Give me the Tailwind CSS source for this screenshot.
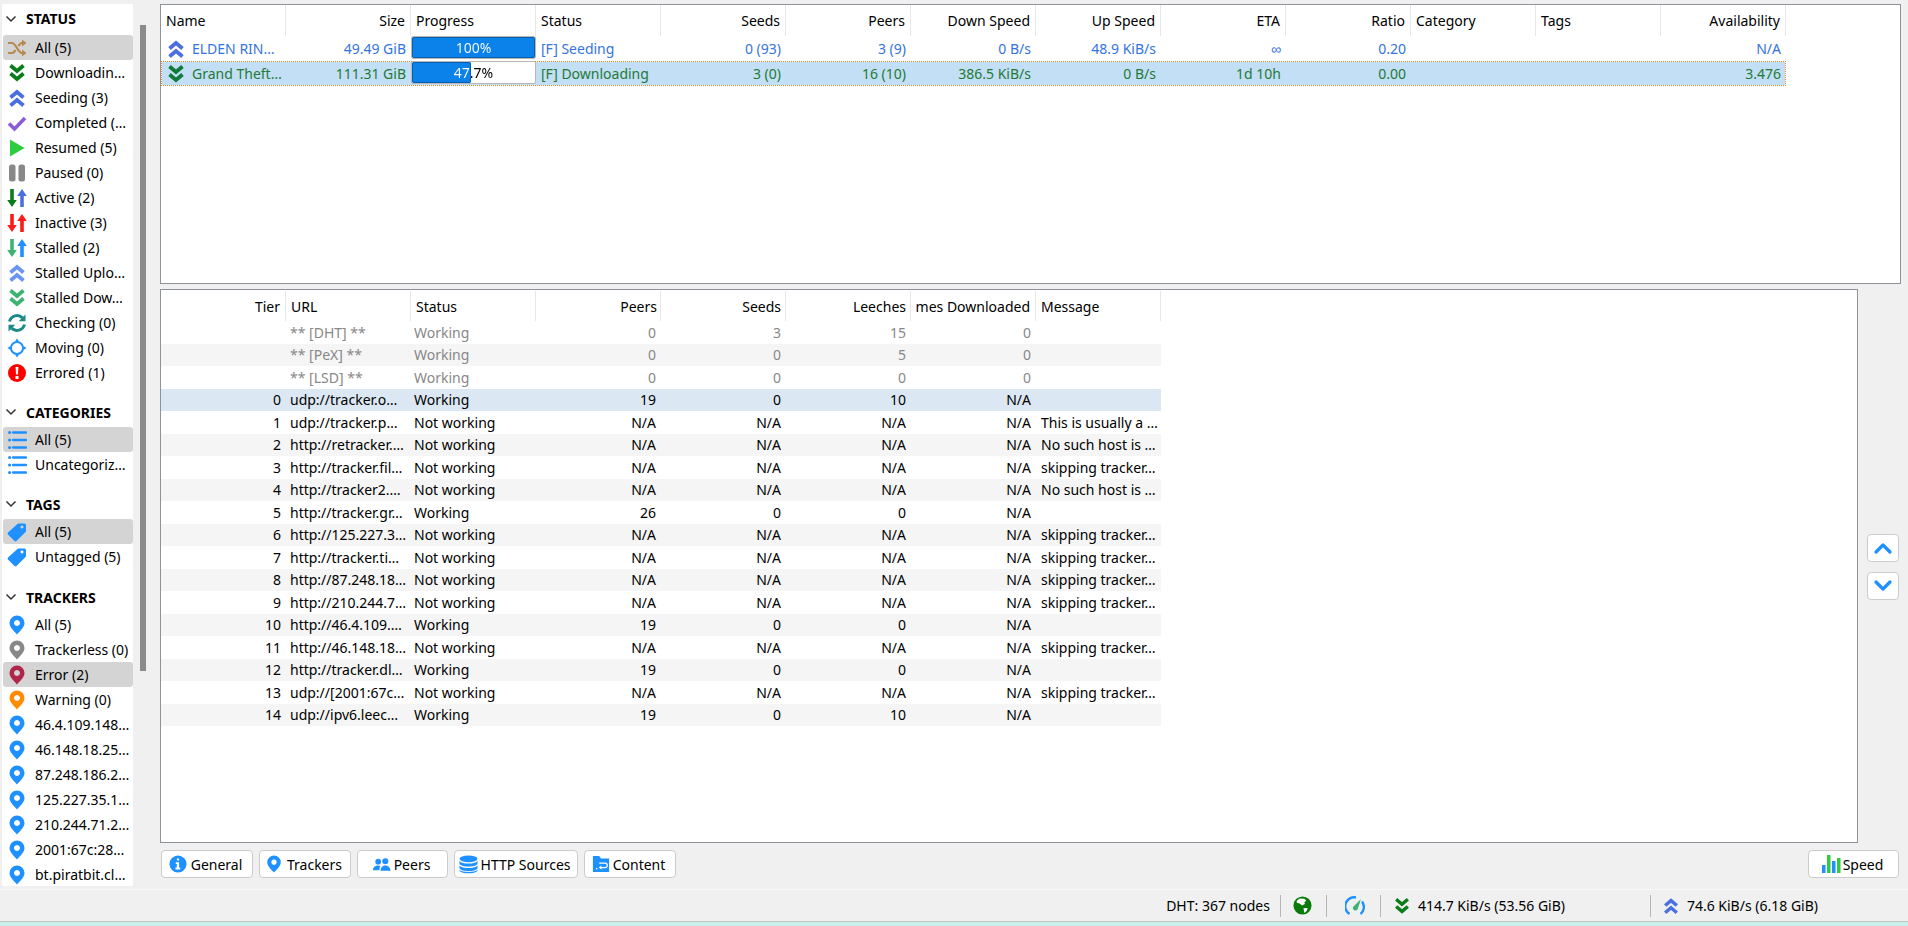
<!DOCTYPE html>
<html lang="en">
<head>
<meta charset="UTF-8">
<title>qBittorrent</title>
<script src="https://cdn.jsdelivr.net/npm/@tailwindcss/browser@4"></script>
</head>
<body class="w-[1908px] h-[926px] overflow-hidden bg-[#f0f0f0] text-black text-[14px] font-['Noto_Sans',sans-serif]">
<svg class="hidden">
  <symbol id="shuffle" viewBox="0 0 20 20"><path d="M1 5h4c4 0 6 10 10 10h2M1 15h4c1.500 0 2.600-1.300 3.500-3M11.500 8c.9-1.700 2-3 3.500-3h2" fill="none" stroke="currentColor" stroke-width="2.200"/><path d="M15 1.500l4.500 3.500-4.500 3.500zM15 11.500l4.500 3.500-4.500 3.500z" fill="currentColor"/></symbol>
  <symbol id="dblDown" viewBox="0 0 20 20"><path d="M3.500 2.500l6.500 5.500 6.500-5.500M3.500 10.500l6.500 5.500 6.500-5.500" fill="none" stroke="currentColor" stroke-width="3.800"/></symbol>
  <symbol id="dblUp" viewBox="0 0 20 20"><path d="M3.500 9.500l6.500-5.500 6.500 5.500M3.500 17.500l6.500-5.500 6.500 5.500" fill="none" stroke="currentColor" stroke-width="3.800"/></symbol>
  <symbol id="check" viewBox="0 0 20 20"><path d="M2 10.500l5.500 5.500 10.500-11" fill="none" stroke="currentColor" stroke-width="3.600"/></symbol>
  <symbol id="play" viewBox="0 0 20 20"><path d="M3 1.500l14.500 8.500-14.500 8.500z" fill="currentColor"/></symbol>
  <symbol id="pause" viewBox="0 0 20 20"><rect x="2" y="1.500" width="6.500" height="17" rx="2.500" fill="currentColor"/><rect x="11.500" y="1.500" width="6.500" height="17" rx="2.500" fill="currentColor"/></symbol>
  <symbol id="arrowDown" viewBox="0 0 10 20"><path d="M3.200 1h3.600v11h3l-4.800 7-4.800-7h3z" fill="currentColor"/></symbol>
  <symbol id="arrowUp" viewBox="0 0 10 20"><path d="M3.200 19h3.600v-11h3l-4.800-7-4.800 7h3z" fill="currentColor"/></symbol>
  <symbol id="refresh" viewBox="0 0 20 20"><path d="M2.500 8.500a7.800 7.800 0 0 1 13-3.700M17.500 11.500a7.800 7.800 0 0 1-13 3.700" fill="none" stroke="currentColor" stroke-width="3"/><path d="M18.500 1.500v6.800h-6.800zM1.500 18.500v-6.800h6.800z" fill="currentColor"/></symbol>
  <symbol id="target" viewBox="0 0 20 20"><circle cx="10" cy="10" r="6" fill="none" stroke="currentColor" stroke-width="2"/><path d="M10 .5l2 3h-4zM10 19.500l-2-3h4zM.5 10l3-2v4zM19.500 10l-3 2v-4z" fill="currentColor"/></symbol>
  <symbol id="error" viewBox="0 0 20 20"><circle cx="10" cy="10" r="9" fill="currentColor"/><path d="M8.600 4h2.800l-.4 7.500h-2zM8.500 13h3v3h-3z" fill="#fff"/></symbol>
  <symbol id="list" viewBox="0 0 20 20"><path d="M1 2.500a1.600 1.600 0 1 0 3.200 0a1.600 1.600 0 1 0-3.200 0M1 10a1.600 1.600 0 1 0 3.200 0a1.600 1.600 0 1 0-3.200 0M1 17.500a1.600 1.600 0 1 0 3.200 0a1.600 1.600 0 1 0-3.200 0" fill="currentColor"/><path d="M6 2.500h13M6 10h13M6 17.500h13" stroke="currentColor" stroke-width="2.300" stroke-linecap="round"/></symbol>
  <symbol id="tag" viewBox="0 0 20 20"><path d="M11 1.500h6.500a1.500 1.500 0 0 1 1.500 1.500v6.500l-9.500 9.500a1.500 1.500 0 0 1-2 0l-6.500-6.500a1.500 1.500 0 0 1 0-2zM15 3.500a1.500 1.500 0 1 0 .01 0z" fill="currentColor" fill-rule="evenodd"/></symbol>
  <symbol id="pin" viewBox="0 0 20 20"><path d="M10 .5a7.500 7.500 0 0 0-7.500 7.500c0 4.500 5 8.500 7.500 11.500 2.500-3 7.500-7 7.500-11.500a7.500 7.500 0 0 0-7.500-7.500zM10 5a3 3 0 1 1-.01 0z" fill="currentColor" fill-rule="evenodd"/></symbol>
  <symbol id="info" viewBox="0 0 20 20"><circle cx="10" cy="10" r="9.500" fill="currentColor"/><path d="M8.800 3.800h2.400v2.400h-2.400zM7.500 8h3.700v6h1.300v2h-5.300v-2h1.500v-4h-1.200z" fill="#fff"/></symbol>
  <symbol id="people" viewBox="0 0 20 20"><circle cx="6.500" cy="7" r="3" fill="currentColor"/><circle cx="14" cy="6.500" r="3.200" fill="currentColor"/><path d="M1 16c0-3 2.500-5 5.500-5 1.200 0 2 .3 2.500.7-.8 1-1.200 2.700-1.200 4.300zM9 16.500c0-3.200 2.200-5.500 5-5.500s5.500 2.300 5.500 5.500z" fill="currentColor"/></symbol>
  <symbol id="database" viewBox="0 0 20 20"><ellipse cx="10" cy="4" rx="9.500" ry="3.500" fill="currentColor"/><path d="M.5 6.200c1.500 2 5.500 2.800 9.500 2.800s8-.8 9.500-2.800v3c-1 2-5.500 3-9.500 3s-8.500-1-9.500-3zM.5 11c1.500 2 5.500 2.800 9.500 2.800s8-.8 9.500-2.800v3c-1 2-5.500 3-9.500 3s-8.500-1-9.500-3zM.5 15.500c1.500 1.500 5.500 2.300 9.500 2.300s8-.8 9.500-2.300v.8c-1 2-5.500 3-9.500 3s-8.500-1-9.500-3z" fill="currentColor"/></symbol>
  <symbol id="folder" viewBox="0 0 20 20"><path d="M1 1h7l2 3h9v15H1z" fill="currentColor"/><path d="M8 9h6.500a2.500 2.500 0 0 1 0 5H9" fill="none" stroke="#fff" stroke-width="1.300"/><path d="M10.500 11.800l-3 2.200 3 2.200z" fill="#fff"/><rect x="4.500" y="14.500" width="1.500" height="1.500" fill="#fff"/></symbol>
  <symbol id="bars" viewBox="0 0 20 20"><rect x="1" y="11" width="3.500" height="8" fill="#1e90ff"/><rect x="6" y="1" width="3.500" height="18" fill="#2ecc40"/><rect x="11" y="7" width="3.500" height="12" fill="#1e90ff"/><rect x="16" y="4" width="3.500" height="15" fill="#2ecc40"/></symbol>
  <symbol id="globe" viewBox="0 0 20 20"><circle cx="10" cy="10" r="9.500" fill="#0a7a0a"/><path d="M4 5l3-2.500 5 .5 2 2-2 1.500.5 2-3 1.500-2.500-2-3-1zM11 13l4.500-.5-1 3-2.500 2.500z" fill="#fff"/></symbol>
  <symbol id="gauge" viewBox="0 0 20 20"><path d="M4.500 18a9 9 0 0 1 6.500-16.500M17 5.500a9 9 0 0 1-1.500 12.500" fill="none" stroke="#1e90ff" stroke-width="2.400"/><path d="M16 3l-3.500 10.500a2.600 2.600 0 0 1-4.500-2.500z" fill="#3cb371"/></symbol>
  <symbol id="chevUp" viewBox="0 0 20 20"><path d="M3 14l7-7 7 7" fill="none" stroke="currentColor" stroke-width="3.200" stroke-linecap="round" stroke-linejoin="round"/></symbol>
  <symbol id="chevDown" viewBox="0 0 20 20"><path d="M3 6l7 7 7-7" fill="none" stroke="currentColor" stroke-width="3.200" stroke-linecap="round" stroke-linejoin="round"/></symbol>
  <symbol id="chevThin" viewBox="0 0 12 12"><path d="M1.500 3.500l4.500 4.500 4.500-4.500" fill="none" stroke="currentColor" stroke-width="1.500"/></symbol>
</svg>

<div class="flex h-[886px]">
  <!-- side filters -->
  <div class="flex w-[160px] shrink-0">
    <div id="sidebar" class="w-[131px] ml-[2px] mt-[4px] h-[882px] overflow-hidden bg-white"></div>
    <div class="w-[6px] ml-[7px] mt-[25px] h-[646px] bg-[#8a8a8a]"></div>
  </div>

  <div class="flex flex-col w-[1741px] pt-[4px]">
    <div class="h-[280px] bg-white border border-[#8d9399]">
      <div id="torrentHead" class="grid grid-cols-[repeat(13,125px)] h-[31px]"></div>
      <div id="torrentRows"></div>
    </div>

    <div class="flex mt-[5px]">
      <div class="w-[1698px] h-[554px] bg-white border border-[#8d9399]">
        <div id="trackerHead" class="grid grid-cols-[repeat(8,125px)] h-[31px] pt-[1px]"></div>
        <div id="trackerRows"></div>
      </div>
      <div class="flex flex-col gap-[10px] ml-[9px] mt-[245px]">
        <button class="flex items-center justify-center w-[32px] h-[28px] bg-white border border-[#cccccc] rounded-[4px] text-[#1e90ff]"><svg class="w-[20px] h-[20px]"><use href="#chevUp"/></svg></button>
        <button class="flex items-center justify-center w-[32px] h-[28px] bg-white border border-[#cccccc] rounded-[4px] text-[#1e90ff]"><svg class="w-[20px] h-[20px]"><use href="#chevDown"/></svg></button>
      </div>
    </div>

    <div class="flex justify-between mt-[7px] pl-[1px] pr-[2px]">
      <div class="flex gap-[6px] text-[#1e90ff]">
        <button class="flex items-center justify-center gap-[4px] w-[92px] h-[28px] pr-[3px] bg-white border border-[#cccccc] rounded-[4px]"><svg class="w-[18px] h-[18px]"><use href="#info"/></svg><span class="text-black">General</span></button>
        <button class="flex items-center justify-center gap-[4px] w-[92px] h-[28px] pr-[3px] bg-white border border-[#cccccc] rounded-[4px]"><svg class="w-[18px] h-[18px]"><use href="#pin"/></svg><span class="text-black">Trackers</span></button>
        <button class="flex items-center justify-center gap-[3px] w-[91px] h-[28px] pr-[3px] bg-white border border-[#cccccc] rounded-[4px]"><svg class="w-[19px] h-[19px]"><use href="#people"/></svg><span class="text-black">Peers</span></button>
        <button class="flex items-center justify-center gap-[3px] w-[124px] h-[28px] pr-[3px] bg-white border border-[#cccccc] rounded-[4px]"><svg class="w-[19px] h-[19px]"><use href="#database"/></svg><span class="text-black">HTTP Sources</span></button>
        <button class="flex items-center justify-center gap-[3px] w-[92px] h-[28px] pr-[3px] bg-white border border-[#cccccc] rounded-[4px]"><svg class="w-[18px] h-[18px]"><use href="#folder"/></svg><span class="text-black">Content</span></button>
      </div>
      <button class="flex items-center justify-center gap-[2px] w-[91px] h-[28px] pr-[3px] bg-white border border-[#cccccc] rounded-[4px]"><svg class="w-[20px] h-[20px]"><use href="#bars"/></svg>Speed</button>
    </div>
  </div>
</div>

<!-- status bar -->
<div class="h-[33px] mt-[3px] border-t border-[#f8f8f8] border-b-[#c4c4c4] border-b flex items-center justify-end pr-[90px]">
  <span class="mr-[10px]">DHT: 367 nodes</span>
  <span class="w-px h-[22px] bg-[#b5b5b5]"></span>
  <svg class="w-[19px] h-[19px] ml-[12px] mr-[14px]"><use href="#globe"/></svg>
  <span class="w-px h-[22px] bg-[#b5b5b5]"></span>
  <svg class="w-[20px] h-[20px] ml-[18px] mr-[15px]"><use href="#gauge"/></svg>
  <span class="w-px h-[22px] bg-[#b5b5b5]"></span>
  <svg class="w-[18px] h-[18px] ml-[12px] mr-[7px] text-[#0a7d1a]"><use href="#dblDown"/></svg>
  <span class="w-[232px]">414.7 KiB/s (53.56 GiB)</span>
  <span class="w-px h-[22px] bg-[#b5b5b5]"></span>
  <svg class="w-[18px] h-[18px] ml-[11px] mr-[7px] text-[#4a6fe0]"><use href="#dblUp"/></svg>
  <span>74.6 KiB/s (6.18 GiB)</span>
</div>
<div class="h-[7px] bg-[#c9f1ec]"></div>

<script>
const icon = (id, cls) => `<svg class="w-[20px] h-[20px] shrink-0 ${cls}"><use href="#${id}"/></svg>`;
const arrows = (a, b) => `<span class="flex w-[20px] h-[20px] shrink-0 justify-center"><svg class="w-[10px] h-[20px] ${a}"><use href="#arrowDown"/></svg><svg class="w-[10px] h-[20px] ${b}"><use href="#arrowUp"/></svg></span>`;

const blue = 'text-[#1e90ff]';
const sections = [
  {name: 'STATUS', cls: 'h-[31px] pb-[2px]', items: [
    [icon('shuffle', 'text-[#b5894f]'), 'All (5)', true],
    [icon('dblDown', 'text-[#0a7d1a]'), 'Downloadin…'],
    [icon('dblUp', 'text-[#4a6fe0]'), 'Seeding (3)'],
    [icon('check', 'text-[#8a5cdb]'), 'Completed (…'],
    [icon('play', 'text-[#2ecc40]'), 'Resumed (5)'],
    [icon('pause', 'text-[#888888]'), 'Paused (0)'],
    [arrows('text-[#0a7d1a]', 'text-[#4a6fe0]'), 'Active (2)'],
    [arrows('text-[#ff1a1a]', 'text-[#ff1a1a]'), 'Inactive (3)'],
    [arrows('text-[#3cb371]', 'text-[#1e90ff]'), 'Stalled (2)'],
    [icon('dblUp', 'text-[#6b96f0]'), 'Stalled Uplo…'],
    [icon('dblDown', 'text-[#3cb371]'), 'Stalled Dow…'],
    [icon('refresh', 'text-[#1a8a8a]'), 'Checking (0)'],
    [icon('target', blue), 'Moving (0)'],
    [icon('error', 'text-[#ff0000]'), 'Errored (1)'],
  ]},
  {name: 'CATEGORIES', cls: 'h-[28px] mt-[14px] pb-[2px]', items: [
    [icon('list', blue), 'All (5)', true],
    [icon('list', blue), 'Uncategoriz…'],
  ]},
  {name: 'TAGS', cls: 'h-[28px] mt-[14px] pb-[2px]', items: [
    [icon('tag', blue), 'All (5)', true],
    [icon('tag', blue), 'Untagged (5)'],
  ]},
  {name: 'TRACKERS', cls: 'h-[28px] mt-[15px] pb-[2px]', items: [
    [icon('pin', blue), 'All (5)'],
    [icon('pin', 'text-[#888888]'), 'Trackerless (0)'],
    [icon('pin', 'text-[#b0264a]'), 'Error (2)', true],
    [icon('pin', 'text-[#ff8c00]'), 'Warning (0)'],
    [icon('pin', blue), '46.4.109.148…'],
    [icon('pin', blue), '46.148.18.25…'],
    [icon('pin', blue), '87.248.186.2…'],
    [icon('pin', blue), '125.227.35.1…'],
    [icon('pin', blue), '210.244.71.2…'],
    [icon('pin', blue), '2001:67c:28…'],
    [icon('pin', blue), 'bt.piratbit.cl…'],
  ]},
];

sidebar.innerHTML = sections.map(s => `
  <div class="flex items-center ${s.cls} pl-[3px]">
    <svg class="w-[12px] h-[12px] mr-[9px] text-[#333333]"><use href="#chevThin"/></svg>
    <span class="font-bold">${s.name}</span>
  </div>
  ${s.items.map(([ic, label, sel]) => `
    <div class="flex items-center gap-[8px] h-[25px] ml-[1px] pl-[4px] whitespace-nowrap rounded-[3px] ${sel ? 'bg-[#d4d4d4]' : ''}">${ic}<span>${label}</span></div>`).join('')}`).join('');

const L = 'justify-start', R = 'justify-end';
const headCell = (text, align, pad = 'px-[5px]') => `<div class="flex items-center ${align} ${pad} overflow-hidden whitespace-nowrap border-r border-[#e6e6e6]">${text}</div>`;
const cell = (text, align, pad = 'px-[5px]') => `<div class="flex items-center ${align} ${pad} overflow-hidden whitespace-nowrap">${text}</div>`;

// torrents
const torrentCols = [['Name', L], ['Size', R], ['Progress', L], ['Status', L], ['Seeds', R], ['Peers', R], ['Down Speed', R], ['Up Speed', R], ['ETA', R], ['Ratio', R], ['Category', L], ['Tags', L], ['Availability', R]];
torrentHead.innerHTML = torrentCols.map(c => headCell(c[0], c[1])).join('');

// the label is one text, painted white over the filled part and black after it
const progressBar = (pct, label, h) => `
  <div class="relative h-[${h}px] bg-white border border-[#b8b8b8] rounded-[2px] overflow-hidden">
    <div class="absolute left-0 top-0 bottom-0 bg-[#0a82ea] shadow-[inset_0_0_0_1px_#0a5fb0] rounded-[2px]" style="width:${pct}%"></div>
    <span class="relative block text-center leading-[21px] bg-clip-text text-transparent" style="background-image:linear-gradient(90deg,#fff ${pct}%,#000 ${pct}%)">${label}</span>
  </div>`;

const torrents = [
  {cls: 'h-[25px] text-[#3474e0]', ic: icon('dblUp', 'text-[#4a6fe0]'), name: 'ELDEN RIN…', pct: 100, prog: '100%', h: 23,
    rest: ['49.49 GiB', '[F] Seeding', '0 (93)', '3 (9)', '0 B/s', '48.9 KiB/s', '∞', '0.20', '', '', 'N/A']},
  {cls: 'h-[25px] text-[#1e7a36] bg-[#c3dff5] shadow-[inset_0_0_0_1px_#fff] [outline-style:dotted] [outline-width:1px] [outline-offset:-1px] [outline-color:#ee7f22]', ic: icon('dblDown', 'text-[#0f7a3a]'), name: 'Grand Theft…', pct: 47.7, prog: '47.7%', h: 24,
    rest: ['111.31 GiB', '[F] Downloading', '3 (0)', '16 (10)', '386.5 KiB/s', '0 B/s', '1d 10h', '0.00', '', '', '3.476']},
];
torrentRows.innerHTML = torrents.map(t => {
  const r = t.rest;
  const cells = [
    `<div class="flex items-center gap-[6px] pl-[5px] overflow-hidden whitespace-nowrap">${t.ic}<span>${t.name}</span></div>`,
    cell(r[0], R),
    `<div>${progressBar(t.pct, t.prog, t.h)}</div>`,
    cell(r[1], L), cell(r[2], R), cell(r[3], R), cell(r[4], R), cell(r[5], R), cell(r[6], R), cell(r[7], R), cell(r[8], L), cell(r[9], L), cell(r[10], R),
  ];
  return `<div class="grid grid-cols-[repeat(13,125px)] w-[1625px] ${t.cls}">${cells.join('')}</div>`;
}).join('');

// trackers
const trackerCols = [['Tier', R], ['URL', L], ['Status', L], ['Peers', R, 'pl-[5px] pr-[3px]'], ['Seeds', R, 'pl-[5px] pr-[4px]'], ['Leeches', R, 'pl-[5px] pr-[4px]'], ['mes Downloaded', R], ['Message', L]];
trackerHead.innerHTML = trackerCols.map(c => headCell(c[0], c[1], c[2])).join('');

const na = ['N/A', 'N/A', 'N/A', 'N/A'];
const skip = 'skipping tracker…';
const trackers = [
  ['', '** [DHT] **', 'Working', '0', '3', '15', '0', ''],
  ['', '** [PeX] **', 'Working', '0', '0', '5', '0', ''],
  ['', '** [LSD] **', 'Working', '0', '0', '0', '0', ''],
  ['0', 'udp://tracker.o…', 'Working', '19', '0', '10', 'N/A', ''],
  ['1', 'udp://tracker.p…', 'Not working', ...na, 'This is usually a …'],
  ['2', 'http://retracker.…', 'Not working', ...na, 'No such host is …'],
  ['3', 'http://tracker.fil…', 'Not working', ...na, skip],
  ['4', 'http://tracker2.…', 'Not working', ...na, 'No such host is …'],
  ['5', 'http://tracker.gr…', 'Working', '26', '0', '0', 'N/A', ''],
  ['6', 'http://125.227.3…', 'Not working', ...na, skip],
  ['7', 'http://tracker.ti…', 'Not working', ...na, skip],
  ['8', 'http://87.248.18…', 'Not working', ...na, skip],
  ['9', 'http://210.244.7…', 'Not working', ...na, skip],
  ['10', 'http://46.4.109.…', 'Working', '19', '0', '0', 'N/A', ''],
  ['11', 'http://46.148.18…', 'Not working', ...na, skip],
  ['12', 'http://tracker.dl…', 'Working', '19', '0', '0', 'N/A', ''],
  ['13', 'udp://[2001:67c…', 'Not working', ...na, skip],
  ['14', 'udp://ipv6.leec…', 'Working', '19', '0', '10', 'N/A', ''],
];
const cellAligns = [R, L, L, R, R, R, R, L];
trackerRows.innerHTML = trackers.map((row, i) => {
  let tone = '';
  if (i < 3) tone = 'text-[#888888] ';
  if (i === 3) tone = 'bg-[#dbe8f3]';
  else if (i % 2 === 1) tone += 'bg-[#f5f5f5]';
  const cells = row.map((v, c) => {
    let pad = 'px-[5px]';
    if (c === 1) pad = 'pl-[4px] pr-[3px]';
    if (c === 2) pad = 'pl-[3px] pr-[3px]';
    return cell(v, cellAligns[c], pad);
  });
  return `<div class="grid grid-cols-[repeat(8,125px)] w-[1000px] h-[22.5px] ${tone}">${cells.join('')}</div>`;
}).join('');
</script>
</body>
</html>
